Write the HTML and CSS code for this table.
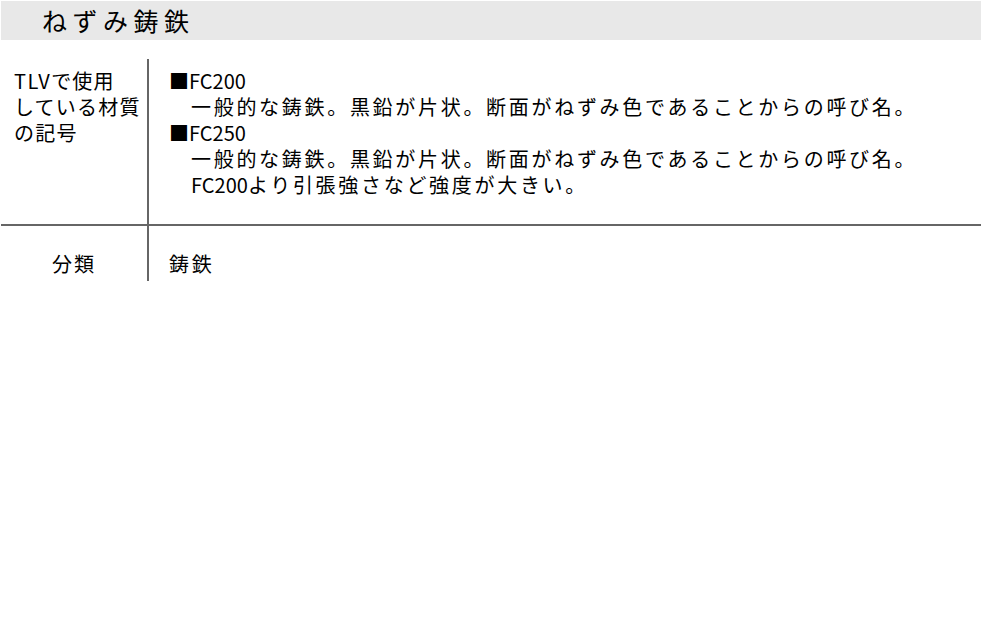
FILE: index.html
```html
<!DOCTYPE html>
<html lang="ja">
<head>
    <meta charset="UTF-8">
    <meta name="viewport" content="width=device-width, initial-scale=1.0">
    <title>ねずみ鋳鉄</title>
    <link rel="stylesheet" href="styles.css">
</head>
<body>
    <h1 class="title">ねずみ鋳鉄</h1>

    <div class="spec">
        <div class="row">
            <div class="label label-left"><span class="code">TLV</span>で使用<br>している材質<br>の記号</div>
            <div class="value">
                <div class="grade">■<span class="code">FC200</span></div>
                <div class="desc">一般的な鋳鉄。黒鉛が片状。断面がねずみ色であることからの呼び名。</div>
                <div class="grade">■<span class="code">FC250</span></div>
                <div class="desc">一般的な鋳鉄。黒鉛が片状。断面がねずみ色であることからの呼び名。<br><span class="code">FC200</span>より引張強さなど強度が大きい。</div>
            </div>
        </div>
        <div class="row">
            <div class="label">分類</div>
            <div class="value">鋳鉄</div>
        </div>
    </div>
</body>
</html>
```

FILE: styles.css
```css
body {
    margin: 0;
    background: #fff;
    color: #000;
    font-family: "Noto Sans CJK JP", "Noto Sans", sans-serif;
}

.title {
    margin: 1px 1px 0;
    height: 39px;
    padding-left: 41px;
    background-color: #e8e8e8;
    font-size: 25px;
    font-weight: normal;
    line-height: 39px;
    letter-spacing: 5.5px;
}

.spec {
    margin: 19px 1px 0;
    font-size: 20px;
    line-height: 26px;
    letter-spacing: 2.7px;
}

.row {
    display: flex;
}

.row + .row {
    border-top: 2px solid #666;
}

.label {
    width: 146px;
    flex-shrink: 0;
    border-right: 2px solid #666;
    text-align: center;
    letter-spacing: 2px;
}

.label-left {
    text-align: left;
    padding-left: 13px;
    width: 133px;
    letter-spacing: 1.2px;
}

.label-left .code {
    letter-spacing: 1.5px;
}

.row:first-child .label,
.row:first-child .value {
    padding-top: 9px;
    padding-bottom: 26px;
}

.row:last-child .label,
.row:last-child .value {
    padding-top: 25px;
    padding-bottom: 4px;
}

.value {
    padding-left: 20px;
}

.grade {
    letter-spacing: 0;
}

.desc {
    padding-left: 22px;
}

.code {
    letter-spacing: 0;
}
```
